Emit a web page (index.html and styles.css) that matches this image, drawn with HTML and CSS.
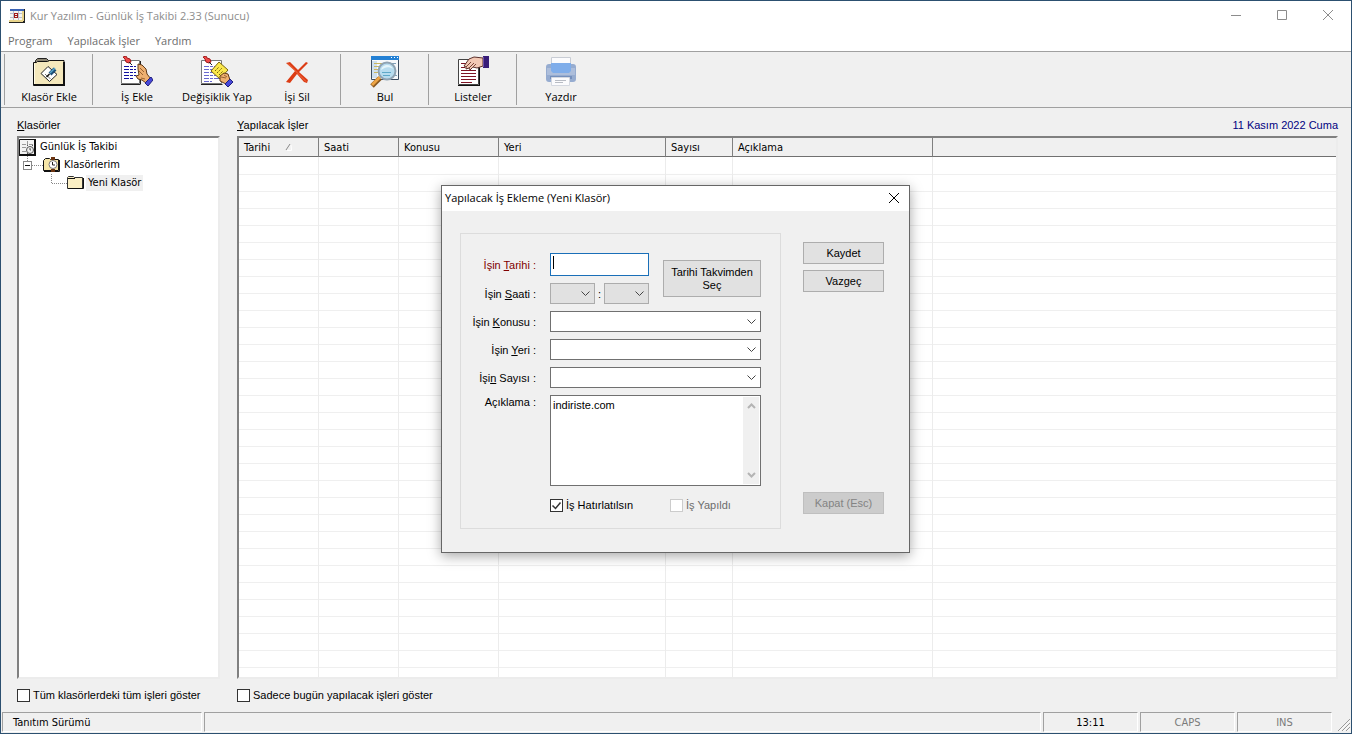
FILE: index.html
```html
<!DOCTYPE html>
<html lang="tr">
<head>
    <meta charset="UTF-8">
    <meta name="viewport" content="width=device-width, initial-scale=1.0">
    <title>Kur Yazılım - Günlük İş Takibi</title>
    <link rel="stylesheet" href="styles.css">
</head>
<body>
  <div class="window">

    <header class="titlebar">
      <svg class="app-icon" width="16" height="16" viewBox="0 0 16 16" shape-rendering="crispEdges">
        <path fill="#222" d="M1 1h15v14H1z"/>
        <path fill="#f4f4f0" d="M1 3h12v9H1z"/>
        <path fill="#3a62b4" d="M1 1h14v2H1z"/>
        <path fill="#e8d48c" d="M13 3h2v10h-2zM0 12h14v2H0z"/>
        <path fill="#b8bccc" d="M1 5h12v1H1zM1 9h12v1H1zM4 3h1v9H4zM9 3h1v9H9z"/>
        <path fill="#a01818" d="M5 5h4v1H5zM5 9h4v1H5zM5 6h1v3H5zM8 6h1v3H8zM6 7h2v1H6z"/>
        <path fill="#222" d="M0 14h15v1H0z"/>
      </svg>
      <h1>Kur Yazılım - Günlük İş Takibi 2.33 (Sunucu)</h1>
      <div class="caption-buttons">
        <button type="button" aria-label="Simge durumuna küçült"><svg width="12" height="12" viewBox="0 0 12 12"><path d="M1 5.500h10"/></svg></button>
        <button type="button" aria-label="Ekranı kapla"><svg width="12" height="12" viewBox="0 0 12 12"><path d="M1.500 .500h9v9h-9z"/></svg></button>
        <button type="button" aria-label="Kapat"><svg width="12" height="12" viewBox="0 0 12 12"><path d="M1 0l10 10M11 0L1 10"/></svg></button>
      </div>
    </header>

    <nav class="menubar">
      <button type="button">Program</button>
      <button type="button">Yapılacak İşler</button>
      <button type="button">Yardım</button>
    </nav>

    <div class="toolbar">
      <div class="tool-group">
        <button type="button">
          <svg width="32" height="32" viewBox="0 0 32 32">
            <path fill="#8c8674" stroke="#222" d="M2.500 7.500v-3l2-2h9l2 2h2v3z"/>
            <path fill="#f4e8bc" stroke="#111" d="M.500 6.500h3l1-1h10l2-1h14.500v25H.500z"/>
            <path fill="none" stroke="#fffbe6" d="M1.500 28V7.500"/>
            <path fill="none" stroke="#111" stroke-width="2" d="M1 29h31M31 6v24"/>
            <path fill="#fff" stroke="#222" d="M8 17.500l7-7 9 8-7.500 7z"/>
            <path stroke="#777" d="M12 18l3 3M14.500 20l3 3"/>
            <path stroke="#1d4f78" stroke-width="4" d="M17 18l5-5"/>
            <path stroke="#58a8cc" stroke-width="1.500" d="M17 17l5-5"/>
            <path stroke="#111" stroke-width="1.500" d="M13.500 21l3-3"/>
          </svg>
          <span>Klasör Ekle</span>
        </button>
      </div>
      <div class="tool-group">
        <button type="button">
          <svg width="32" height="32" viewBox="0 0 32 32">
            <path fill="#fff" stroke="#777" d="M.500 4.500h18v23H.500z"/>
            <path stroke="#222" d="M0 28.500h19.500M19.500 5v23"/>
            <path stroke="#1212a0" stroke-dasharray="5 1 3 1" d="M3 10.500h12M3 13.500h12M3 16.500h12M3 19.500h12M3 22.500h9"/>
            <path fill="#f04848" stroke="#a01c1c" d="M2 1l3-1 1 2 3 1 1 3-2 1-3-1-1-3z"/>
            <path stroke="#222" d="M8 6l3 3"/>
            <path fill="#eeb070" stroke="#5e3818" d="M17 8l4 1 4 4 1 5 4 5-5 4-4-3-4-1-2-3 3-1-1-6z"/>
            <path stroke="#9a6230" fill="none" d="M18 15l4 4M19 12l4 4M20 22l4 1"/>
            <path fill="#4848d8" stroke="#20207c" d="M24 27l6-6 2 3-5 6z"/>
          </svg>
          <span>İş Ekle</span>
        </button>
        <button type="button">
          <svg width="32" height="32" viewBox="0 0 32 32">
            <path fill="#fff" stroke="#777" d="M.500 4.500h20v23H.500z"/>
            <path stroke="#222" d="M0 28.500h21.500"/>
            <path stroke="#6a6ad0" stroke-dasharray="5 1 3 1" d="M3 10.500h11M3 13.500h9M3 16.500h10M3 19.500h12M3 22.500h15M3 25.500h8"/>
            <path fill="#f04848" stroke="#a01c1c" d="M2 1l3-1 1 2 3 1 1 3-2 1-3-1-1-3z"/>
            <path stroke="#222" d="M8 6l3 3"/>
            <path fill="#fbe84c" stroke="#79650c" d="M10 15l8-9 9 8-8 9z"/>
            <path stroke="#75620c" stroke-dasharray="2 1" d="M14 15l4-4M16 17l5-5M18 19l4-4"/>
            <path fill="#eeb070" stroke="#5e3818" d="M19 20l4-3 4 1 2 6-4 4-6-3z"/>
            <path stroke="#9a6230" fill="none" d="M20 21l5 1M23 19l3 2"/>
            <path fill="#4848d8" stroke="#20207c" d="M24 28l5-5 3 3-5 5z"/>
          </svg>
          <span>Değişiklik Yap</span>
        </button>
        <button type="button">
          <svg width="32" height="32" viewBox="0 0 32 32">
            <path fill="#dc3c14" d="M5 7l4-1 8 8 8-8 2 1-9 9 9 8-1 3-3-1-7-8-7 9-4-1 9-11z"/>
            <path stroke="#f07048" d="M7 7.500l18 18"/>
          </svg>
          <span>İşi Sil</span>
        </button>
      </div>
      <div class="tool-group">
        <button type="button">
          <svg width="32" height="32" viewBox="0 0 32 32">
            <path fill="#f6f8fb" stroke="#3c4c60" d="M2.500 1.500h27v22h-27z"/>
            <path fill="#2380d4" d="M2 0h28v4H2z"/>
            <path fill="#fff" d="M22 1h1v1h-1zM25 1h1v1h-1zM28 1h1v1h-1z"/>
            <path fill="#cfe0ef" d="M3 5h5v17H3z"/>
            <path stroke="#c9b660" d="M5 7.500h9M5 10.500h7M5 13.500h6M5 16.500h6"/>
            <path stroke="#7ea0b8" d="M16 7.500h11M24 19.500h4"/>
            <path stroke="#8a5820" stroke-width="5" d="M3 30l8-8"/>
            <path stroke="#eda444" stroke-width="3" d="M3 29l8-8"/>
            <circle cx="18" cy="15" r="8.500" fill="#b7dcef" stroke="#8fa3b3" stroke-width="2"/>
            <path stroke="#5da8c8" d="M13 16.500h9M14 19.500h7"/>
            <path fill="#e4f5fb" d="M12 14c1-6 10-7 12-1-4-3-8-2-12 1z"/>
          </svg>
          <span>Bul</span>
        </button>
      </div>
      <div class="tool-group">
        <button type="button">
          <svg width="32" height="32" viewBox="0 0 32 32">
            <path fill="#fff" stroke="#444" d="M1.500 3.500h20v25h-20z"/>
            <path stroke="#111" d="M1 29.500h22M22.500 4v26"/>
            <path stroke="#7d1424" d="M4 7.500h5M4 11.500h4M4 14.500h15M4 17.500h15M4 20.500h15M4 23.500h15M4 26.500h11"/>
            <path fill="#f3c8b4" stroke="#5c302c" d="M7 10l5-7 5-2 9 1v8l-6 2-4-1-3 3-1-2-3 1 0-2z"/>
            <path stroke="#7c4438" fill="none" d="M9 11l5-5M12 12l5-5M15 12l4-4"/>
            <path fill="#381c78" d="M26 0h6v12h-6z"/>
            <path fill="#6c50a8" d="M26 1h1v10h-1z"/>
          </svg>
          <span>Listeler</span>
        </button>
      </div>
      <div class="tool-group">
        <button type="button">
          <svg width="32" height="32" viewBox="0 0 32 32">
            <path fill="#fbfbfd" stroke="#c8ccd4" d="M6.500 1.500h19v9h-19z"/>
            <rect x="1" y="8" width="30" height="18" rx="3" fill="#96acd0"/>
            <path fill="#adbedb" d="M2 12h28v7H2z"/>
            <path fill="#7fadea" d="M6 7h20v8l-2 2H8l-2-2z"/>
            <path fill="#748fbc" d="M5 20h22v3H5z"/>
            <path fill="#fbfbfd" stroke="#d4d8e0" d="M6.500 21.500h18v8h-18z"/>
            <path stroke="#b8bcc4" d="M10 24.500h11M10 26.500h8"/>
          </svg>
          <span>Yazdır</span>
        </button>
      </div>
    </div>

    <main class="content">
      <section class="folders">
        <div class="heading"><h2><u>K</u>lasörler</h2></div>
        <ul class="tree sunken">
          <li class="tree-root">
            <svg width="17" height="17" viewBox="0 0 17 17">
              <path fill="#f4f4f4" stroke="#111" d="M.500 .500h15v15H.500z"/>
              <path stroke="#111" stroke-width="2" d="M0 16h17M16 0v17"/>
              <path stroke="#999" d="M3 5.500h4M3 8.500h4M8.500 2v5M3 12.500h4M10 5.500h4"/>
              <circle cx="11" cy="11" r="3.500" fill="#eee" stroke="#555"/>
              <path stroke="#555" d="M9 7l-1-1M13 7l1-1M11 9v2h1M9 14l-1 1"/>
            </svg>
            <span>Günlük İş Takibi</span>
          </li>
          <li class="tree-folder">
            <svg width="20" height="18" viewBox="0 0 20 18" shape-rendering="crispEdges">
              <path stroke="#888" stroke-dasharray="1 1" fill="none" d="M4.500 0v5M9 9.500h11"/>
              <path fill="#fff" stroke="#888" d="M.500 5.500h8v8h-8z"/>
              <path stroke="#111" d="M2 9.500h5"/>
            </svg>
            <svg width="17" height="16" viewBox="0 0 17 16">
              <path fill="#f6e6a8" stroke="#111" d="M.500 3.500l2-2h4l1 1h8v11H.500z"/>
              <path stroke="#111" d="M1 14.500h15.500V3"/>
              <path fill="#6c3410" d="M8 0h4v3H8zM8 12h4v3H8z"/>
              <circle cx="10" cy="7.500" r="4" fill="#fff" stroke="#777"/>
              <path stroke="#222" fill="none" d="M9.500 5v3H12"/>
            </svg>
            <span>Klasörlerim</span>
          </li>
          <li class="tree-leaf">
            <svg width="16" height="18" viewBox="0 0 16 18" shape-rendering="crispEdges">
              <path stroke="#888" stroke-dasharray="1 1" fill="none" d="M.500 0v9.500h15"/>
            </svg>
            <svg width="17" height="16" viewBox="0 0 17 16">
              <path fill="#fbefc4" stroke="#333" d="M.500 2.500l1-1h5l1 1h8v11H.500z"/>
              <path stroke="#111" d="M1 13.500h15.500V3M1 3.500h7"/>
            </svg>
            <span class="selected">Yeni Klasör</span>
          </li>
        </ul>
        <label class="check"><input type="checkbox">Tüm klasörlerdeki tüm işleri göster</label>
      </section>

      <section class="jobs">
        <div class="heading">
          <h2><u>Y</u>apılacak İşler</h2>
          <span class="today">11 Kasım 2022 Cuma</span>
        </div>
        <div class="job-list sunken">
          <table>
            <colgroup>
              <col class="col-date"><col class="col-time"><col class="col-subject"><col class="col-place"><col class="col-number"><col class="col-note"><col>
            </colgroup>
            <thead>
              <tr>
                <th>Tarihi
                  <svg class="sort" width="7" height="8" viewBox="0 0 7 8"><path stroke="#888" d="M1 7l4-6"/><path stroke="#fff" d="M2 7.500h4.500L6 2"/></svg>
                </th>
                <th>Saati</th><th>Konusu</th><th>Yeri</th><th>Sayısı</th><th>Açıklama</th><th></th>
              </tr>
            </thead>
            <tbody>
              <tr><td></td><td></td><td></td><td></td><td></td><td></td><td></td></tr>
            </tbody>
          </table>
        </div>
        <label class="check"><input type="checkbox">Sadece bugün yapılacak işleri göster</label>
      </section>
    </main>

    <footer class="statusbar">
      <div class="status-text">Tanıtım Sürümü</div>
      <div class="status-fill"></div>
      <div class="status-key">13:11</div>
      <div class="status-key off">CAPS</div>
      <div class="status-key off">INS</div>
      <svg class="grip" width="14" height="14" viewBox="0 0 14 14">
        <path stroke="#999" d="M1 13L13 1M5 13l8-8M9 13l4-4"/>
        <path stroke="#fff" d="M2.500 13L13 2.500M6.500 13L13 6.500M10.500 13l2.500-2.500"/>
      </svg>
    </footer>

    <form class="dialog" role="dialog" aria-labelledby="dialog-title">
      <div class="dialog-title">
        <h2 id="dialog-title">Yapılacak İş Ekleme (Yeni Klasör)</h2>
        <button type="button" aria-label="Kapat"><svg width="12" height="12" viewBox="0 0 12 12"><path d="M1 1l10 10M11 1L1 11"/></svg></button>
      </div>
      <div class="dialog-body">
        <div class="fields">
          <label class="required" for="tarih">İşin <u>T</u>arihi :</label>
          <div class="date-box">
            <input id="tarih" type="text">
            <span class="caret"></span>
          </div>
          <button class="btn pick-date" type="button">Tarihi Takvimden Seç</button>

          <label for="saat">İşin <u>S</u>aati :</label>
          <div class="time">
            <select id="saat" disabled></select>
            <span>:</span>
            <select aria-label="Dakika" disabled></select>
          </div>

          <label for="konu">İşin <u>K</u>onusu :</label>
          <select class="wide" id="konu"></select>

          <label for="yer">İşin <u>Y</u>eri :</label>
          <select class="wide" id="yer"></select>

          <label for="sayi">İşi<u>n</u> Sayısı :</label>
          <select class="wide" id="sayi"></select>

          <label class="top" for="aciklama">Açıklama :</label>
          <div class="memo wide">
            <textarea id="aciklama">indiriste.com</textarea>
            <div class="scroll">
              <svg width="9" height="6" viewBox="0 0 9 6"><path d="M1 5l3.500-3.500L8 5"/></svg>
              <svg width="9" height="6" viewBox="0 0 9 6"><path d="M1 1l3.500 3.500L8 1"/></svg>
            </div>
          </div>

          <div class="options wide">
            <label class="check"><input type="checkbox" checked>İş Hatırlatılsın</label>
            <label class="check disabled"><input type="checkbox" disabled>İş Yapıldı</label>
          </div>
        </div>

        <div class="actions">
          <button class="btn" type="button">Kaydet</button>
          <button class="btn" type="button">Vazgeç</button>
          <button class="btn close" type="button" disabled>Kapat (Esc)</button>
        </div>
      </div>
    </form>

  </div>
</body>
</html>
```
FILE: styles.css
```css
* {
  box-sizing: border-box;
}

body {
  margin: 0;
  background: #f0f0f0;
  color: #000;
  font: 11px/14px "Liberation Sans", Arial, sans-serif;
}

h1, h2 {
  margin: 0;
  font: inherit;
}

button, input, select, textarea {
  margin: 0;
  padding: 0;
  font: inherit;
  color: inherit;
}

svg {
  display: block;
  flex: none;
  fill: none;
}

.window {
  position: relative;
  display: flex;
  flex-direction: column;
  min-height: 100vh;
  border: 1px solid #2c5070;
}

/* title bar and menu */
.titlebar {
  display: flex;
  align-items: center;
  gap: 5px;
  height: 29px;
  padding-left: 8px;
  background: #fff;
  color: #8c8c8c;
  font: 11px/16px "Open Sans", "Noto Sans", sans-serif;
}

.caption-buttons {
  display: flex;
  margin-left: auto;
}

.caption-buttons button {
  display: flex;
  align-items: center;
  justify-content: center;
  width: 46px;
  height: 29px;
  border: 0;
  background: none;
}

.caption-buttons path {
  stroke: #8c8c8c;
}

.menubar {
  display: flex;
  gap: 15px;
  height: 21px;
  padding-left: 7px;
  background: #fff;
  color: #6d6d6d;
  font: 11px/20px "Open Sans", "Noto Sans", sans-serif;
}

.menubar button {
  border: 0;
  background: none;
}

/* toolbar */
.toolbar {
  display: flex;
  height: 57px;
  padding: 2px 3px;
  border-top: 1px solid #a0a0a0;
  border-bottom: 1px solid #a0a0a0;
  font: 11px/18px "Open Sans", "Noto Sans", sans-serif;
}

.tool-group {
  display: flex;
  padding: 0 3px 0 4px;
  border-left: 1px solid #a0a0a0;
}

.tool-group button {
  display: flex;
  flex-direction: column;
  align-items: center;
  width: 80px;
  padding-top: 2px;
  border: 0;
  background: none;
  white-space: nowrap;
}

/* panels */
.content {
  display: flex;
  flex: 1;
  gap: 17px;
  padding: 10px 13px 10px 16px;
}

.folders {
  display: flex;
  flex-direction: column;
  width: 203px;
}

.jobs {
  display: flex;
  flex-direction: column;
  flex: 1;
}

.heading {
  display: flex;
  justify-content: space-between;
  height: 18px;
}

.today {
  color: #000080;
}

.sunken {
  flex: 1;
  border: 2px solid;
  border-color: #808080 #ececec #ececec #808080;
  background: #fff;
}

.tree {
  margin: 0;
  padding: 0;
  list-style: none;
  font: 11px/16px "DejaVu Sans Condensed", Tahoma, sans-serif;
}

.tree li {
  display: flex;
  align-items: center;
  height: 18px;
}

.tree span {
  padding: 0 2px;
  margin-left: 2px;
}

.tree-folder {
  padding-left: 4px;
}

.tree-leaf {
  padding-left: 32px;
}

.tree .selected {
  background: #f0f0f0;
}

.check {
  display: flex;
  align-items: center;
  gap: 3px;
}

.content .check {
  margin-top: 9px;
}

.check input {
  appearance: none;
  width: 13px;
  height: 13px;
  border: 1px solid #333;
  background: #fff;
}

.check input:checked {
  background: #fff url("data:image/svg+xml,%3Csvg xmlns='http://www.w3.org/2000/svg' width='11' height='11'%3E%3Cpath d='M1.500 5.500l3 3 5-6' fill='none' stroke='%23333' stroke-width='1.500'/%3E%3C/svg%3E") center no-repeat;
}

.check.disabled {
  color: #6d6d6d;
}

.check.disabled input {
  border-color: #ccc;
}

/* job list: rows are 17px, drawn behind the column lines */
.job-list {
  display: flex;
  background: repeating-linear-gradient(#fff 0 16px, #efefef 16px 17px) 0 20px #fff;
}

.job-list table {
  width: 100%;
  table-layout: fixed;
  border-collapse: separate;
  border-spacing: 0;
  font: 11px/16px "DejaVu Sans Condensed", Tahoma, sans-serif;
}

.job-list th {
  height: 19px;
  padding: 2px 5px 0;
  border-right: 1px solid #808080;
  border-bottom: 1px solid #707070;
  background: #f0f0f0;
  font-weight: normal;
  text-align: left;
  white-space: nowrap;
}

.job-list td {
  padding: 0;
  border-right: 1px solid #ececec;
}

.job-list th:last-child,
.job-list td:last-child {
  border-right: 0;
}

.sort {
  display: inline-block;
  margin-left: 12px;
}

.col-date,
.col-time {
  width: 80px;
}

.col-subject {
  width: 100px;
}

.col-place {
  width: 167px;
}

.col-number {
  width: 67px;
}

.col-note {
  width: 200px;
}

/* status bar */
.statusbar {
  display: flex;
  gap: 2px;
  height: 21px;
  padding: 0 0 1px 1px;
  font: 11px/20px "DejaVu Sans Condensed", Tahoma, sans-serif;
}

.statusbar div {
  border: 1px solid;
  border-color: #a0a0a0 #fff #fff #a0a0a0;
}

.status-text {
  width: 200px;
  padding-left: 10px;
}

.status-fill {
  flex: 1;
}

.status-key {
  width: 95px;
  text-align: center;
}

.off {
  color: #7a7a7a;
}

.grip {
  align-self: flex-end;
  margin-left: 3px;
}

/* dialog */
.dialog {
  position: absolute;
  top: 184px;
  left: calc(50% - 235px);
  width: 469px;
  border: 1px solid #666;
  background: #f0f0f0;
  box-shadow: 0 3px 12px rgba(0, 0, 0, 0.35);
}

.dialog-title {
  display: flex;
  align-items: center;
  justify-content: space-between;
  height: 25px;
  padding: 0 9px 2px 3px;
  background: #fff;
  font: 11px/16px "Open Sans", "Noto Sans", sans-serif;
}

.dialog-title button {
  border: 0;
  background: none;
}

.dialog-title path {
  stroke: #000;
}

.dialog-body {
  display: flex;
  gap: 22px;
  padding: 22px 25px 23px 18px;
}

.fields {
  display: grid;
  grid-template-columns: 75px 99px 98px;
  align-items: center;
  gap: 7px 14px;
  width: 321px;
  padding: 19px 0 16px;
  border: 1px solid #dcdcdc;
}

.fields > label {
  text-align: right;
}

.fields > .top {
  align-self: start;
}

.required {
  color: #800000;
}

.wide {
  grid-column: 2 / 4;
}

.date-box {
  position: relative;
  height: 23px;
}

.date-box input {
  width: 100%;
  height: 23px;
  padding: 0 3px 4px;
  border: 1px solid #1a6fb8;
  background: #fff;
  outline: none;
}

.caret {
  position: absolute;
  top: 3px;
  left: 3px;
  width: 1px;
  height: 13px;
  background: #000;
}

.pick-date {
  grid-column: 3;
  grid-row: 1 / 3;
  height: 37px;
}

.time {
  display: flex;
  align-items: center;
  justify-content: space-between;
}

.fields select {
  appearance: none;
  height: 21px;
  border: 1px solid #707070;
  border-radius: 0;
  background: #fff url("data:image/svg+xml,%3Csvg xmlns='http://www.w3.org/2000/svg' width='9' height='6'%3E%3Cpath d='M.500 .500l4 4 4-4' fill='none' stroke='%23444'/%3E%3C/svg%3E") right 4px center no-repeat;
}

.time select {
  width: 45px;
}

.fields select:disabled {
  border-color: #acacac;
  background-color: #e1e1e1;
  opacity: 1;
}

.memo {
  display: flex;
  height: 91px;
  border: 1px solid #707070;
  background: #fff;
}

.memo textarea {
  flex: 1;
  min-width: 0;
  padding: 2px;
  border: 0;
  outline: none;
  background: #fff;
  resize: none;
}

.scroll {
  display: flex;
  flex-direction: column;
  align-items: center;
  justify-content: space-between;
  width: 16px;
  margin: 1px;
  padding: 6px 0;
  background: #f0f0f0;
}

.scroll path {
  stroke: #b4b4b4;
  stroke-width: 2;
}

.options {
  display: grid;
  grid-template-columns: 120px 1fr;
  padding-top: 5px;
}

.btn {
  border: 1px solid #adadad;
  background: #e1e1e1;
  line-height: 13px;
}

.btn:disabled {
  border-color: #bfbfbf;
  background: #ccc;
  color: #838383;
}

.actions {
  display: flex;
  flex-direction: column;
  flex: 1;
  gap: 6px;
  padding: 9px 0 15px;
}

.actions .btn {
  height: 22px;
}

.actions .close {
  margin-top: auto;
}
```
